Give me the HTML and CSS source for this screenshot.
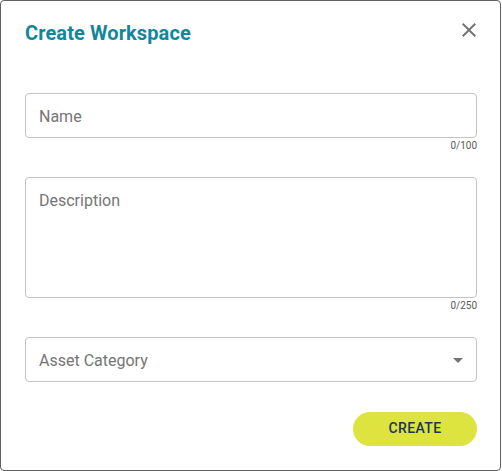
FILE: index.html
```html
<!DOCTYPE html>
<html>

<head>
    <meta http-equiv="content-type" content="text/html; charset=UTF-8">
    <title>
        Create Workspace
    </title>
    <link rel="stylesheet" href="styles.css">
</head>

<body>

    <div class="dialog">
        <div class="header">
            <h2 class="title">Create Workspace</h2>
            <button class="close" type="button">
                <svg width="24" height="24" viewBox="0 0 24 24">
                    <path d="M19 6.41L17.59 5 12 10.590 6.41 5 5 6.41 10.59 12 5 17.59 6.41 19 12 13.41 17.59 19 19 17.59 13.41 12z" fill="#757575" />
                </svg>
            </button>
        </div>

        <form>
            <div class="field">
                <input class="data" type="text" name="name" placeholder="Name">
                <div class="counter">0/100</div>
            </div>
            <div class="field">
                <textarea class="data area" name="description" placeholder="Description"></textarea>
                <div class="counter">0/250</div>
            </div>
            <div class="field">
                <div class="data select">
                    <span>Asset Category</span>
                    <svg width="10" height="5" viewBox="0 0 10 5">
                        <path d="M0 0L5 5 10 0z" fill="#757575" />
                    </svg>
                </div>
            </div>
            <div class="actions">
                <button class="create" type="button">CREATE</button>
            </div>
        </form>
    </div>

</body>

</html>
```

FILE: styles.css
```css
body {
    margin: 0;
    font-family: Roboto, "Liberation Sans", sans-serif;
}

.dialog {
    box-sizing: border-box;
    width: 501px;
    height: 471px;
    border: 1px solid #616161;
    border-radius: 4px;
    padding: 0 23px 0 24px;
    background: white;
}

.header {
    display: flex;
    justify-content: space-between;
    align-items: flex-start;
    padding-top: 17px;
}

.title {
    margin: 3px 0 0 0;
    font-size: 20px;
    line-height: 24px;
    font-weight: 700;
    letter-spacing: 0.1px;
    color: #13869e;
}

.close {
    width: 24px;
    height: 24px;
    margin-right: -4px;
    padding: 0;
    border: none;
    background: none;
}

form {
    margin-top: 48px;
}

.field {
    margin-bottom: 25px;
}

.data {
    box-sizing: border-box;
    display: block;
    width: 100%;
    height: 45px;
    margin: 0;
    padding: 2px 13px 0 13px;
    border: 1px solid #c4c4c4;
    border-radius: 4px;
    font-family: inherit;
    font-size: 16px;
    color: #212121;
    background: white;
    outline: none;
}

.data::placeholder {
    color: #757575;
}

.area {
    height: 121px;
    padding-top: 13px;
    resize: none;
    line-height: 20px;
}

.select {
    display: flex;
    align-items: center;
    justify-content: space-between;
    color: #757575;
    padding-right: 13px;
}

.counter {
    margin-top: 2px;
    text-align: right;
    font-size: 10px;
    line-height: 12px;
    color: #5a5a5a;
}

.actions {
    display: flex;
    justify-content: flex-end;
    margin-top: 30px;
}

.create {
    width: 124px;
    height: 34px;
    padding: 0 0 2px 0;
    border: none;
    border-radius: 17px;
    background: #dde440;
    color: #1a3852;
    font-family: inherit;
    font-size: 14px;
    font-weight: 500;
    letter-spacing: 0.4px;
}
```
